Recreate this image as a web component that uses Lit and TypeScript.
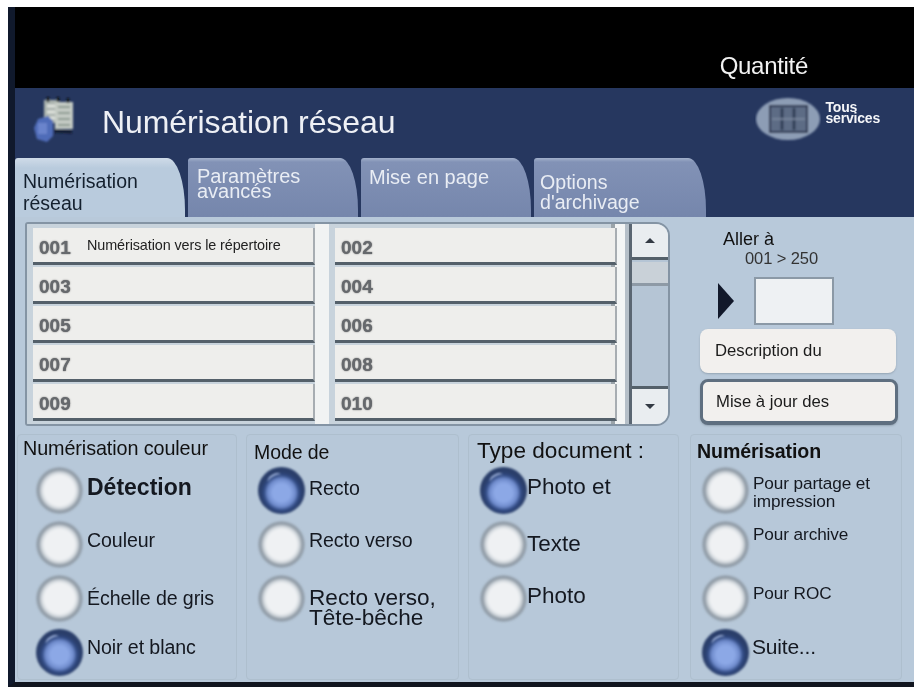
import { LitElement, html, css } from "lit";
import { customElement } from "lit/decorators.js";

type Opt = { t: string; on?: boolean; c?: string };
type Group = { title: string; cls: string; opts: Opt[] };

const groups: Group[] = [
  { title: "Numérisation couleur", cls: "g1", opts: [
    { t: "Détection", c: "bold s3" }, { t: "Couleur", c: "s4" }, { t: "Échelle de gris" }, { t: "Noir et blanc", on: true, c: "s5" } ] },
  { title: "Mode de", cls: "g2", opts: [
    { t: "Recto", on: true, c: "s2" }, { t: "Recto verso", c: "s4" }, { t: "Recto verso,<br>Tête-bêche", c: "tight" } ] },
  { title: "Type document :", cls: "g3", opts: [
    { t: "Photo et", on: true, c: "big s3" }, { t: "Texte", c: "big" }, { t: "Photo", c: "big s2" } ] },
  { title: "Numérisation", cls: "g4", opts: [
    { t: "Pour partage et<br>impression", c: "small tight2" }, { t: "Pour archive", c: "small up" }, { t: "Pour ROC", c: "small s5" }, { t: "Suite...", on: true, c: "mid s5" } ] },
];

const rows = [
  ["001", "002"], ["003", "004"], ["005", "006"], ["007", "008"], ["009", "010"],
];

@customElement("app-root")
export class AppRoot extends LitElement {
  static styles = css`
    :host { display: block; width: 914px; height: 690px; background: #fff; overflow: hidden;
      font-family: "Liberation Sans", Arial, sans-serif; color: #111; }
    .screen { margin: 7px 0 0 8px; height: 680px; background: #000; border-left: 7px solid #10192c;
      border-bottom: 5px solid #11151f; display: flex; flex-direction: column; filter: blur(0.55px); box-sizing: border-box; }
    .top { box-sizing: border-box; height: 81px; flex: none; display: flex; justify-content: flex-end; align-items: flex-end; padding: 0 106px 8px 0; }
    .qty { color: #f2f2f2; font-size: 24px; line-height: 28px; letter-spacing: -0.3px; }
    .head { height: 70px; flex: none; background: #26375f; display: flex; align-items: center; position: relative; padding-bottom: 2px; box-sizing: border-box; }
    .logo { margin-left: 13px; width: 48px; height: 58px; flex: none; }
    .title { margin-left: 26px; color: #eef0f5; font-size: 32px; line-height: 40px; letter-spacing: -0.1px; }
    .all { margin-left: auto; display: flex; align-items: flex-start; margin-right: 34px; }
    .allicon { width: 66px; height: 48px; flex: none; margin-top: -6px; }
    .alltext { color: #f4f5f8; font-size: 14px; line-height: 11px; font-weight: bold; margin: 1px 0 0 5px; letter-spacing: -0.2px; }
    .tabs { height: 59px; flex: none; background: #26375f; display: flex; gap: 3px; align-items: stretch; }
    .tab { box-sizing: border-box; width: 170px; border-radius: 3px 18px 0 0 / 3px 52px 0 0; background: linear-gradient(#a2b0cb 0, #8292b6 4px, #7586ac 100%);
      color: #e9edf4; font-size: 20px; line-height: 17px; padding: 8px 0 0 9px; }
    .tab.active { background: linear-gradient(#cfdbe8, #b9cbdd 10px); color: #14202e; padding: 12px 0 0 8px; font-size: 19.5px; line-height: 22px; }
    .tab.p { line-height: 15px; padding-top: 11px; }
    .tab.m { padding: 8px 0 0 8px; line-height: 22px; }
    .tab.o { width: 172px; padding: 14px 0 0 6px; line-height: 20px; font-size: 19.6px; }
    .panel { flex: 1; min-height: 0; background: #b8c9da; padding: 5px 2px 0 2px; display: flex; flex-direction: column; }
    .upper { display: flex; height: 212px; flex: none; }
    .list { box-sizing: border-box; margin-left: 8px; width: 645px; height: 204px; border: 2px solid #8494a4; border-radius: 3px 14px 14px 3px;
      background: #c8d3dc; display: flex; overflow: hidden; }
    .cells { flex: 1; display: grid; grid-template-columns: 282px 282px; column-gap: 20px; grid-auto-rows: 37px; row-gap: 2px; padding: 4px 0 0 6px; position: relative; background: linear-gradient(90deg, #c8d3dc 0 288px, #f1f3f3 288px 302px, #c8d3dc 302px 584px, #9aa3a9 584px 588px, #f3f5f5 588px 598px, #b5bfc8 598px); }
    .cell { background: #eeeeec; border-right: 2px solid #a7adb2; border-bottom: 3px solid #54606a; box-sizing: border-box; display: flex; align-items: center; padding: 5px 0 0 6px; }
    .num { color: #66696d; font-size: 19px; font-weight: bold; width: 48px; letter-spacing: 0; text-shadow: 0 0 1.5px #555; }
    .cell-text { font-size: 14.4px; margin-top: -5px; color: #222; letter-spacing: -0.1px; white-space: nowrap; }
    .scroll { width: 36px; flex: none; border-left: 3px solid #5a6672; background: #b5c5d5; display: flex; flex-direction: column; }
    .btn { height: 33px; background: #e9edf0; border-bottom: 3px solid #54606a; display: flex; align-items: center; justify-content: center; flex: none; }
    .thumb { height: 24px; background: #c9d1d8; border-bottom: 3px solid #8e9aa6; box-sizing: border-box; margin-top: 2px; flex: none; }
    .track { flex: 1; }
    .btn.down { height: 35px; border-bottom: none; border-top: 3px solid #54606a; }
    .side { flex: 1; position: relative; display: flex; flex-direction: column; padding-left: 28px; }
    .goto { margin: 10px 0 0 25px; font-size: 18px; line-height: 14px; }
    .range { margin: 5px 0 0 47px; font-size: 16.5px; line-height: 14px; color: #333; letter-spacing: -0.1px; }
    .entry { display: flex; align-items: center; margin: 12px 0 0 20px; height: 48px; }
    .arrow { width: 0; height: 0; border-left: 16px solid #11182a; border-top: 18px solid transparent; border-bottom: 18px solid transparent; }
    .input { box-sizing: border-box; width: 80px; height: 48px; margin-left: 20px; background: #eef1f3; border: 2px solid #8b99a6; }
    .action { box-sizing: border-box; height: 44px; width: 196px; margin: 4px 0 0 2px; background: #f2f0ee; border-radius: 8px; display: flex; align-items: center; padding-left: 15px; font-size: 16.7px; color: #1b1b1b; box-shadow: 0 1px 2px #94a4b3; white-space: nowrap; }
    .action.b2 { margin-top: 6px; width: 198px; height: 46px; border: 3px solid #5f6f80; padding-left: 13px; border-bottom-width: 4px; }
    .groups { display: grid; grid-template-columns: 220px 213px 211px 214px; column-gap: 9px; flex: 1; min-height: 0; }
    .group { border: 1px solid #aebfce; border-radius: 4px; background: #b7c8d9; margin-bottom: 3px; position: relative; box-sizing: border-box; }
    .group.g4 { margin-left: 2px; }
    .gtitle { font-size: 19.8px; line-height: 22px; white-space: nowrap; margin: 2px 0 0 5px; height: 26px; letter-spacing: -0.1px; }
    .g2 .gtitle { margin: 6px 0 0 7px; height: 22px; font-size: 19.5px; }
    .g3 .gtitle { font-size: 22.6px; letter-spacing: 0; margin: 5px 0 0 8px; height: 23px; }
    .g4 .gtitle { font-size: 19.6px; font-weight: bold; margin: 5px 0 0 6px; height: 23px; }
    .opt { display: flex; align-items: center; height: 54px; }
    .opts { padding-left: 18px; }
    .g2 .opts { padding-left: 11px; }
    .g3 .opts { padding-left: 11px; }
    .g4 .opts { padding-left: 11px; }
    .radio { box-sizing: border-box; width: 47px; height: 47px; border-radius: 50%; flex: none; filter: blur(0.9px); background: radial-gradient(circle closest-side, #eff1f3 0 64%, #d3d9de 76%, #8b96a1 90%, #a3b1be 100%); }
    .radio.on { background: radial-gradient(circle closest-side at 50% 55%, #8ca8e6 0 42%, #6f8bcc 66%, #2f4880 84%, #2a3e6a 100%); position: relative; }
    .radio.on::after { content: ""; position: absolute; left: 9px; top: 7px; width: 15px; height: 7px; border-top: 2px solid #a9bce4; border-radius: 50%; transform: rotate(-30deg); }
    .label { font-size: 19.6px; line-height: 20px; letter-spacing: -0.1px; margin-left: 4px; white-space: nowrap; color: #141820; }
    .label.bold { font-weight: bold; font-size: 23px; margin-left: 4px; letter-spacing: 0; }
    .label.big { font-size: 22.5px; letter-spacing: 0; margin-left: 0; }
    .label.tight { line-height: 20px; font-size: 22.6px; letter-spacing: 0; margin-top: 20px; }
    .label.mid { font-size: 21px; margin-left: 3px; letter-spacing: -0.2px; }
    .label.small { font-size: 17.2px; margin-left: 4px; letter-spacing: -0.1px; }
    .label.small.tight2 { line-height: 18px; margin-top: 4px; }
    .label.small.up { margin-top: -20px; }
    .s2 { margin-bottom: 4px; }
    .s3 { margin-bottom: 6px; }
    .s4 { margin-bottom: 8px; }
    .s5 { margin-bottom: 10px; }
  `;

  private renderGroup(g: Group) {
    return html`<section class="group ${g.cls}">
      <div class="gtitle">${g.title}</div>
      <div class="opts">
        ${g.opts.map((o) => {
          const parts = o.t.split("<br>");
          return html`<div class="opt">
            <div class="radio ${o.on ? "on" : ""}"></div>
            <div class="label ${o.c ?? ""}">${parts.map((p, i) => html`${i ? html`<br />` : ""}${p}`)}</div>
          </div>`;
        })}
      </div>
    </section>`;
  }

  render() {
    return html`<div class="screen">
      <div class="top"><div class="qty">Quantité</div></div>
      <div class="head">
        <svg class="logo" viewBox="0 0 48 58">
          <defs><filter id="b"><feGaussianBlur stdDeviation="1" /></filter></defs>
          <g filter="url(#b)">
            <rect x="16" y="7" width="14" height="23" fill="#aab3ae" />
            <rect x="27" y="9" width="18" height="27" fill="#c4cbc4" />
            <path d="M19 13h8M19 19h8M19 25h8" stroke="#dfe3dd" stroke-width="3" />
            <path d="M30 14h12M30 20h12M30 26h12M30 32h12" stroke="#8b9890" stroke-width="2" />
            <path d="M20 4v5M30 4v5M40 5v5" stroke="#101219" stroke-width="2.5" />
            <path d="M10 26l10 -3 5 5v15l-6 6-10-3-3-11z" fill="#4f6cb8" />
            <path d="M10 30h9v11h-9z" fill="#6b84cc" />
            <path d="M26 38l18 1" stroke="#121a2e" stroke-width="3" />
          </g>
        </svg>
        <div class="title">Numérisation réseau</div>
        <div class="all">
          <svg class="allicon" viewBox="0 0 66 48">
            <defs><filter id="c"><feGaussianBlur stdDeviation="1.2" /></filter></defs>
            <g filter="url(#c)">
              <ellipse cx="33" cy="24" rx="32" ry="21" fill="#8d9db5" />
              <rect x="15" y="11" width="37" height="26" fill="#5d6c85" stroke="#293450" stroke-width="2" />
              <path d="M27 13v22M39 13v22" stroke="#2b3550" stroke-width="2.5" />
              <path d="M17 24h33" stroke="#7f8da2" stroke-width="1.5" />
            </g>
          </svg>
          <div class="alltext">Tous<br />services</div>
        </div>
      </div>
      <div class="tabs">
        <div class="tab active">Numérisation<br />réseau</div>
        <div class="tab p">Paramètres<br />avancés</div>
        <div class="tab m">Mise en page</div>
        <div class="tab o">Options<br />d'archivage</div>
      </div>
      <div class="panel">
        <div class="upper">
          <div class="list">
            <div class="cells">
              ${rows.map(([a, b], i) => html`
                <div class="cell"><span class="num">${a}</span>${i === 0 ? html`<span class="cell-text">Numérisation vers le répertoire</span>` : ""}</div>
                <div class="cell"><span class="num">${b}</span></div>`)}
            </div>
            <div class="scroll">
              <div class="btn">
                <svg width="10" height="5" viewBox="0 0 12 6"><path d="M6 0L12 6H0z" fill="#333a44" /></svg>
              </div>
              <div class="thumb"></div>
              <div class="track"></div>
              <div class="btn down">
                <svg width="10" height="5" viewBox="0 0 12 6"><path d="M0 0H12L6 6z" fill="#333a44" /></svg>
              </div>
            </div>
          </div>
          <div class="side">
            <div class="goto">Aller à</div>
            <div class="range">001 &gt; 250</div>
            <div class="entry"><div class="arrow"></div><div class="input"></div></div>
            <div class="action">Description du</div>
            <div class="action b2">Mise à jour des</div>
          </div>
        </div>
        <div class="groups">${groups.map((g) => this.renderGroup(g))}</div>
      </div>
    </div>`;
  }
}
